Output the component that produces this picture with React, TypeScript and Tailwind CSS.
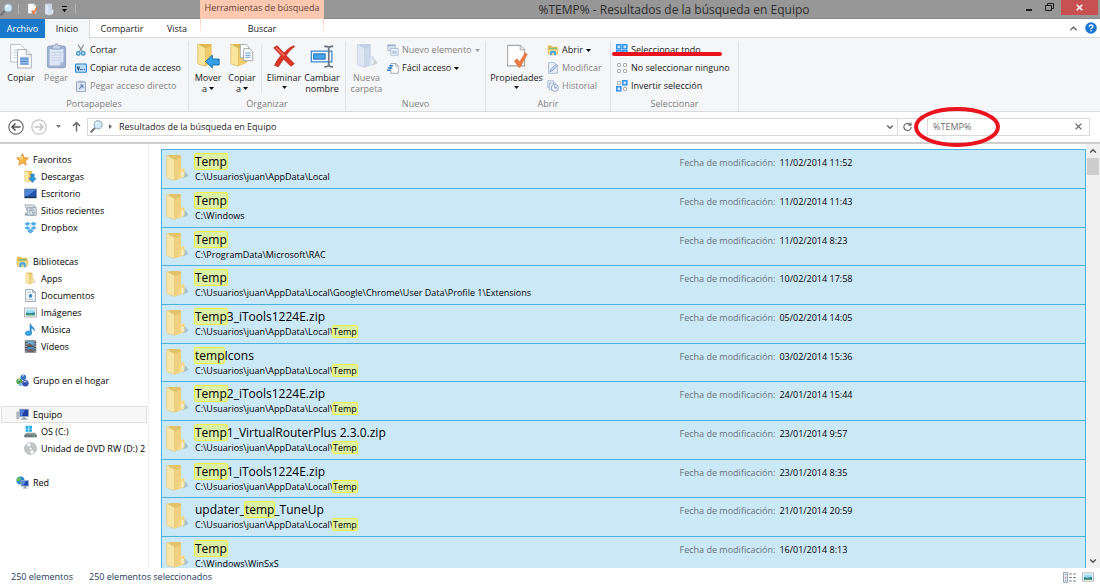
import type { ReactNode } from "react";

type IconProps = { className?: string };

/* ---------- icons ---------- */

const Svg = ({ className = "size-3", box = "0 0 16 16", children }: IconProps & { box?: string; children: ReactNode }) => (
  <svg viewBox={box} className={`shrink-0 ${className}`} fill="none" aria-hidden="true">
    {children}
  </svg>
);

const Magnifier = ({ className }: IconProps) => (
  <Svg className={className}>
    <path d="M6 10 1.500 14.500" stroke="#6d6f73" strokeWidth="2.400" strokeLinecap="round" />
    <circle cx="10" cy="6" r="5" fill="#cfe8f8" stroke="#8fa3b3" strokeWidth="1.300" />
    <path d="M7 5.500a3 3 0 0 1 3-2.500" stroke="#fff" strokeWidth="1.300" />
  </Svg>
);

const PageCheck = ({ className }: IconProps) => (
  <Svg className={className} box="0 0 24 28">
    <path d="M1.500 1.500h14l5 5v18h-19z" fill="#fff" stroke="#a6a6a6" strokeWidth="1.200" />
    <path d="M15.500 1.500v5h5" fill="#e8e8e8" stroke="#a6a6a6" />
    <path d="m9 19 3-2.500 3 3.500 6-10 2.500 1.500-8 14.500h-1.500z" fill="#ee7d45" stroke="#d4622e" strokeWidth=".6" />
  </Svg>
);

const Folder = ({ className, muted = false }: IconProps & { muted?: boolean }) => (
  <Svg className={className} box="0 0 24 28">
    <path d="M18 24.500 23.500 22q-1-3-4-5z" fill="#000" opacity=".16" />
    <path d="M3.500 1h11.500l1 1v22l-6 2z" fill={muted ? "#c3cfe4" : "#e2c36b"} />
    <path d="m1.500 1.500 7 3.500q1 .5 1 1.500v20L2.500 24q-1-.3-1-1.500z" fill={muted ? "#dfe7f4" : "#f8e6a8"} stroke={muted ? "#b7c5dd" : "#e2c578"} strokeWidth=".6" />
    <path d="M9.500 6.500 16 3.500V24l-6.500 2.500z" fill={muted ? "#cdd8ea" : "#eed080"} />
    <path d="M15 15.500q3-2 4.500-1V22q0 1-1 1.300L13 25.500z" fill={muted ? "#d5deed" : "#f3d987"} />
    <path d="M17.500 18v4.500" stroke="#fff" strokeWidth="1.400" />
  </Svg>
);

const CopyPages = ({ className }: IconProps) => (
  <Svg className={className} box="0 0 28 30">
    <path d="M2 1.500h11l5 5V22H2z" fill="#fff" stroke="#aeb4bb" />
    <path d="M5 8h9M5 11h9M5 14h9M5 17h9" stroke="#b9cde0" />
    <path d="M10 7.500h10l6 6V29H10z" fill="#fff" stroke="#9aa1a9" />
    <path d="M20 7.500v6h6" fill="#eef0f2" stroke="#9aa1a9" />
    <path d="M13 16h10v9H13z" fill="#8eb9e8" />
    <path d="M13 18.500h10M13 21.500h10M13 24.500h10" stroke="#4d86c6" />
  </Svg>
);

const Clipboard = ({ className }: IconProps) => (
  <Svg className={className} box="0 0 24 30">
    <rect x="1.500" y="3.500" width="21" height="25" rx="2" fill="#9db0d0" stroke="#8c9fc2" />
    <path d="M4 7h16v15l-4 4H4z" fill="#dde6f5" />
    <path d="M6 11h12M6 14h12M6 17h12M6 20h12" stroke="#c3d0e6" />
    <path d="M20 22h-4v4z" fill="#b3c3de" />
    <path d="M7 3h3l1-2h2l1 2h3v4H7z" fill="#c8d3e6" stroke="#8c9fc2" />
  </Svg>
);

const Scissors = ({ className }: IconProps) => (
  <Svg className={className}>
    <path d="M4 1 10 10M11.500 1 6 10" stroke="#8d969f" strokeWidth="1.800" />
    <circle cx="4.500" cy="12.500" r="2.300" stroke="#2f8fd0" strokeWidth="1.800" />
    <circle cx="11" cy="12.500" r="2.300" stroke="#2f8fd0" strokeWidth="1.800" />
  </Svg>
);

const PathBox = ({ className }: IconProps) => (
  <Svg className={className}>
    <rect x=".7" y="2.700" width="14.600" height="11" rx="1" fill="#b9dcf7" stroke="#2e86d2" strokeWidth="1.400" />
    <path d="m3 6 1.500 4.500L6 6M7 10h2M10 10h1M12 10h1" stroke="#16436f" strokeWidth="1.400" />
  </Svg>
);

const ShortcutPaste = ({ className }: IconProps) => (
  <Svg className={className}>
    <path d="M2 2.500h12v13H2z" fill="#dfe7f3" stroke="#93a5c6" strokeWidth="1.300" />
    <path d="M5 1h6v3H5z" fill="#a7b6d1" />
    <path d="m5.500 12 4.500-5M6.500 6.700H10.500V11" stroke="#7188b3" strokeWidth="1.500" />
  </Svg>
);

const FolderMove = ({ className }: IconProps) => (
  <Svg className={className} box="0 0 28 30">
    <path d="M4 1h14v22l-7 4z" fill="#dfb94f" />
    <path d="m2 1 8 4q1 .5 1 1.500V27l-8-2.500q-1-.3-1-1.500z" fill="#fae59c" stroke="#d9b555" strokeWidth=".8" />
    <path d="M11 6.500 18 3v21l-7 3z" fill="#efcd6c" />
    <path d="M11 21.500 19 14v4.500h8v7h-8V29z" fill="#34a0e8" stroke="#14659f" />
  </Svg>
);

const FolderCopy = ({ className }: IconProps) => (
  <Svg className={className} box="0 0 28 30">
    <path d="M3 1h14v22l-7 4z" fill="#dfb94f" />
    <path d="m1 1 8 4q1 .5 1 1.500V27l-8-2.500q-1-.3-1-1.500z" fill="#fae59c" stroke="#d9b555" strokeWidth=".8" />
    <path d="M10 6.500 20 3v20l-10 4z" fill="#efcd6c" />
    <path d="M12 1.500h7l3 3V17H12z" fill="#fff" stroke="#9aa1a9" />
    <path d="M16 6.500h7l3.500 3.500v10.500H16z" fill="#fff" stroke="#8f969e" />
    <path d="M18 11.500h6M18 14h6M18 16.500h6" stroke="#5d93ce" strokeWidth="1.200" />
  </Svg>
);

const DeleteCross = ({ className }: IconProps) => (
  <Svg className={className} box="0 0 28 28">
    <path d="M2 4.500 6 2l8 8.500C18 6 21 3.500 25.500 2l1 1C22 6 19 9.500 16.500 13.500L26 23l-4 3-8.500-8.500C11 21 9 24 7.500 26.500L3 25c2-4.500 4.500-8 7.500-11.500z" fill="#dd3427" stroke="#ac1d14" strokeWidth=".8" />
    <path d="m5 4.500 9 9" stroke="#f58378" strokeWidth="1.400" />
  </Svg>
);

const Rename = ({ className }: IconProps) => (
  <Svg className={className} box="0 0 28 28">
    <rect x="1.500" y="8" width="23" height="12" fill="#fff" stroke="#438fcf" strokeWidth="1.500" />
    <rect x="4" y="11" width="13" height="6" fill="#47a2ea" stroke="#1c6bb0" />
    <path d="M16 2.500q4 0 5 1.500 1-1.500 5-1.500M16 25.500q4 0 5-1.500 1 1.500 5 1.500M21 4v20" stroke="#6f7880" strokeWidth="2" />
  </Svg>
);

const NewItem = ({ className }: IconProps) => (
  <Svg className={className}>
    <path d="M1 1h10v8H1z" fill="#dbe4f1" stroke="#a3b3cf" />
    <path d="M1 1h10v2H1z" fill="#a3b3cf" />
    <path d="M5 6h10v9H5z" fill="#edf2f9" stroke="#a3b3cf" />
    <path d="M7 9h6v4H7z" fill="#b9c9e1" />
  </Svg>
);

const EasyAccess = ({ className }: IconProps) => (
  <Svg className={className}>
    <path d="M5 2h7l3 3v10H5z" fill="#fff" stroke="#8f969e" />
    <path d="M11.500 2v3.500H15" stroke="#8f969e" />
    <path d="M3 5h5M1 8h6M0 11h5" stroke="#2380cf" strokeWidth="1.700" />
  </Svg>
);

const OpenFolder = ({ className }: IconProps) => (
  <Svg className={className}>
    <path d="M1 2h5l1 1.500h7V13H1z" fill="#e6bf55" />
    <path d="M3 5h10v5H3z" fill="#78c486" />
    <path d="M1 7h14l-1.500 7h-11z" fill="#f9df8b" stroke="#d2aa44" strokeWidth=".6" />
    <path d="M4 15v-4q0-2 2-2h4q2 0 2 2v4h-2.500v-3h-3v3z" fill="#49a6e3" />
  </Svg>
);

const EditPage = ({ className }: IconProps) => (
  <Svg className={className}>
    <path d="M2 1h8l4 4v10H2z" fill="#e8eef7" stroke="#9eafcc" />
    <path d="m4 13 1-3 7-7 2 2-7 7z" fill="#c4d1e6" stroke="#8298c0" />
  </Svg>
);

const History = ({ className }: IconProps) => (
  <Svg className={className}>
    <path d="M1 1h8v9H1z" fill="#dfe7f3" stroke="#a5b5d0" />
    <path d="M3 4h8v9H3z" fill="#dfe7f3" stroke="#a5b5d0" />
    <circle cx="10.500" cy="10.500" r="4.700" fill="#edf2f9" stroke="#8fa3c6" strokeWidth="1.200" />
    <path d="M10.500 7.500v3h3" stroke="#7288b2" strokeWidth="1.200" />
  </Svg>
);

const cells = [
  [1, 1],
  [9, 1],
  [1, 9],
  [9, 9],
];

const SelectGrid = ({ className, active }: IconProps & { active: number[] }) => (
  <Svg className={className}>
    {cells.map(([x, y], i) =>
      active.includes(i) ? (
        <rect key={i} x={x} y={y} width="5.500" height="5.500" fill="#cbe6fc" stroke="#2b8ff0" strokeWidth="1.900" />
      ) : (
        <rect key={i} x={x + 1} y={y + 1} width="4" height="4" rx=".5" fill="#fff" stroke="#a5a5a5" strokeWidth="1.200" />
      ),
    )}
  </Svg>
);

const Star = ({ className }: IconProps) => (
  <Svg className={className}>
    <path d="m8 .8 2.100 4.900 5.200.5-3.900 3.500 1.200 5.200L8 12.200l-4.600 2.700 1.200-5.200L.7 6.200l5.200-.5z" fill="#fbb540" stroke="#dd7f23" strokeWidth=".9" />
    <path d="M8 3v5L4 7z" fill="#fde09a" />
  </Svg>
);

const Downloads = ({ className }: IconProps) => (
  <Svg className={className}>
    <path d="M1 1h9v13H1z" fill="#e6c35d" />
    <path d="m1 1 5 2v12l-5-1z" fill="#fdeba9" stroke="#d9b659" strokeWidth=".5" />
    <path d="M8.500 5h4v5H15l-4.500 5.500L6 10h2.500z" fill="#2f96e0" stroke="#1869a8" strokeWidth=".6" />
  </Svg>
);

const Desktop = ({ className }: IconProps) => (
  <Svg className={className}>
    <path d="M.5 2.500h15v11H.5z" fill="#2454ad" stroke="#8894a8" />
    <path d="M1 3h14L4 11H1z" fill="#4f86d8" />
    <path d="M1 12h14v1.500H1z" fill="#222f4d" />
  </Svg>
);

const Recent = ({ className }: IconProps) => (
  <Svg className={className}>
    <path d="M1 1h9l3 1v6H4z" fill="#e7ecef" stroke="#959fa7" />
    <path d="M4 4h11v10H4z" fill="#dce5eb" stroke="#8e99a3" />
    <path d="M6 6h6M6 8h3" stroke="#879cae" />
    <circle cx="10" cy="10.500" r="3" fill="#fff" stroke="#7b91a5" />
    <path d="M10 9v2h2" stroke="#4f6e87" />
    <path d="m2 10 3 4H1z" fill="#819bb0" />
  </Svg>
);

const Dropbox = ({ className }: IconProps) => (
  <Svg className={className}>
    <path d="M4.500 1 8 3.500 4 6 .5 3.500zM11.500 1l4 2.500L12 6 8 3.500zM4 6l4 2.500L4.500 11 .5 8.500zM12 6l3.500 2.500-4 2.500L8 8.500zM8 9.500l3.500 2.300V13L8 15.300 4.500 13v-1.200z" fill="#55aee9" />
    <path d="m8 3.500 4 2.500-4 2.500L4 6z" fill="#d8effc" />
  </Svg>
);

const Documents = ({ className }: IconProps) => (
  <Svg className={className}>
    <path d="M2 .7h8.500L14 4v11.300H2z" fill="#f4f8fb" stroke="#8a98a6" />
    <path d="M10.500.7V4H14" stroke="#8a98a6" />
    <path d="M4.500 4h4M4.500 12.500h7" stroke="#8fb4d5" />
    <circle cx="8" cy="8.500" r="2.200" fill="#3d86c2" />
  </Svg>
);

const Picture = ({ className }: IconProps) => (
  <Svg className={className}>
    <path d="M.6 2.500h14.800v11H.6z" fill="#fff" stroke="#919ba5" />
    <path d="M2.500 4.500h11v7h-11z" fill="#9fdaf4" />
    <path d="m2.500 8 4 1 7-1v3.500h-11z" fill="#1f7c99" />
    <path d="M2.500 10.500 8 9.500l5.500 1v1h-11z" fill="#54a45d" />
  </Svg>
);

const Music = ({ className }: IconProps) => (
  <Svg className={className}>
    <path d="M8 1c0 3 5.500 4 5 9-.6-2-2-3.500-4-4v6.500H7.300V1z" fill="#2c93dc" stroke="#1a74b8" strokeWidth=".5" />
    <ellipse cx="5.500" cy="12.500" rx="4" ry="2.800" fill="#3ca5e8" stroke="#1a74b8" strokeWidth=".6" />
  </Svg>
);

const Film = ({ className }: IconProps) => (
  <Svg className={className}>
    <path d="M1 .5h14v15H1z" fill="#4a4f56" />
    <path d="M4 1.500h8v6H4z" fill="#66b3df" />
    <path d="M4 8.500h8v6H4z" fill="#4b8cba" />
    <path d="m4 6 3-2 5 3v.5H4zM4 13l4-2 4 2v1.500H4z" fill="#7d5a52" />
    <path d="M2.500 1v14M13.500 1v14" stroke="#e8e8e8" strokeWidth="1.400" strokeDasharray="1.500 1.500" />
  </Svg>
);

const HomeGroup = ({ className }: IconProps) => (
  <Svg className={className}>
    <circle cx="9" cy="4" r="3.500" fill="#3570c2" />
    <circle cx="4" cy="9" r="3.500" fill="#4da043" />
    <circle cx="11.500" cy="11.500" r="4" fill="#3b52b4" />
    <circle cx="5.500" cy="13" r="2" fill="#6fbfe8" />
    <path d="M7.500 2.500q1.500-1 2.500 0M2.500 8q1.200-1.500 2.500-.5M9.500 10q1.500-1.500 3.500-.3" stroke="#e4f2fb" strokeWidth="1.200" />
  </Svg>
);

const Computer = ({ className }: IconProps) => (
  <Svg className={className}>
    <path d="M1 5h2.500v8H1z" fill="#b7bfc6" stroke="#828b94" strokeWidth=".6" />
    <path d="M4.500 1.500h11v9h-11z" fill="#1d3fa8" stroke="#a4adb8" />
    <path d="M5 2h6L7 10H5z" fill="#4f7fdc" />
    <path d="M8.500 11h3v2h2.500v1.500H6V13h2.500z" fill="#9aa4ae" />
  </Svg>
);

const Drive = ({ className }: IconProps) => (
  <Svg className={className}>
    <path d="M2 1h3.500v3.500H2zM6.300 1h3.500v3.500H6.300zM2 5.300h3.500v3H2zM6.300 5.300h3.500v3H6.300z" fill="#19aee5" />
    <path d="m3 9.500 10.500 0L15.500 12v3H.5v-3z" fill="#8d989f" />
    <path d="M.5 12h15v3H.5z" fill="#6c777e" />
    <path d="M11.500 13.500h2" stroke="#77ef73" strokeWidth="1.400" />
  </Svg>
);

const Disc = ({ className }: IconProps) => (
  <Svg className={className}>
    <circle cx="8" cy="8" r="7.200" fill="#c5c8ca" stroke="#97999b" strokeWidth=".8" />
    <path d="M8 8 3 3a7 7 0 0 1 5-2zM8 8l5 5a7 7 0 0 1-5 2z" fill="#f2f3f4" />
    <circle cx="8" cy="8" r="2" fill="#fff" stroke="#97999b" strokeWidth=".8" />
  </Svg>
);

const Network = ({ className }: IconProps) => (
  <Svg className={className}>
    <circle cx="5.500" cy="5.500" r="5" fill="#2c86cf" />
    <path d="M2 2.500q3-2 4 .5T3 6 .8 5zM5 7l3 .5L6 10.300z" fill="#6bc653" />
    <path d="M6.500 5.500h9v7h-9z" fill="#1f45b2" stroke="#a9b7ca" />
    <path d="M7 6h5l-3 6H7z" fill="#5c8be2" />
    <path d="M10 13h2.500v1.500h1.500v1H8.500v-1H10z" fill="#8794a3" />
  </Svg>
);

const Caret = ({ className = "text-black" }: IconProps) => (
  <svg viewBox="0 0 5 3" className={`h-[3px] w-[5px] shrink-0 ${className}`} aria-hidden="true">
    <path d="M0 0h5L2.500 3z" fill="currentColor" />
  </svg>
);

const Chevron = ({ className, up = false }: IconProps & { up?: boolean }) => (
  <Svg className={className} box="0 0 10 10">
    <path d={up ? "M1.500 7 5 3.500 8.500 7" : "M1.500 3 5 6.500 8.500 3"} stroke="currentColor" strokeWidth="1.800" />
  </Svg>
);

/* ---------- ribbon ---------- */

type BigButtonProps = { icon: ReactNode; lines: string[]; caret?: boolean; disabled?: boolean; className?: string };

function BigButton({ icon, lines, caret, disabled, className = "" }: BigButtonProps) {
  const oneLine = lines.length === 1;
  return (
    <button
      type="button"
      disabled={disabled}
      className={`flex flex-col items-center pt-px leading-[11px] ${disabled ? "text-[#858585]" : ""} ${className}`}>
      <span className="mb-[2px] flex h-7 items-center">{icon}</span>
      {lines.map((line, i) => (
        <span key={line} className="flex items-center gap-[2px] whitespace-nowrap">
          {line}
          {caret && !oneLine && i === lines.length - 1 && <Caret />}
        </span>
      ))}
      {caret && oneLine && <Caret className="mt-[3px]" />}
    </button>
  );
}

type SmallButtonProps = { icon: ReactNode; label: string; caret?: boolean; disabled?: boolean; children?: ReactNode };

function SmallButton({ icon, label, caret, disabled, children }: SmallButtonProps) {
  return (
    <button
      type="button"
      disabled={disabled}
      className={`relative flex h-[18px] items-center gap-[3px] whitespace-nowrap ${disabled ? "text-[#858585]" : ""}`}>
      {icon}
      {label}
      {caret && <Caret className={disabled ? "text-[#a0a0a0]" : "text-black"} />}
      {children}
    </button>
  );
}

function Group({ title, className, children }: { title: string; className: string; children: ReactNode }) {
  return (
    <section aria-label={title} className={`flex shrink-0 flex-col border-r border-[#e2e3e4] ${className}`}>
      <div className="flex h-14">{children}</div>
      <div className="text-center leading-[14px] text-[#808080]">{title}</div>
    </section>
  );
}

function Ribbon() {
  return (
    <div className="flex h-[74px] shrink-0 overflow-hidden border-b border-[#dadbdc] bg-[#f5f6f7] pt-[3px]">
      <Group title="Portapapeles" className="w-[189px]">
        <BigButton className="w-[42px]" icon={<CopyPages className="h-[26px] w-6" />} lines={["Copiar"]} />
        <BigButton className="w-7" icon={<Clipboard className="h-[26px] w-[21px]" />} lines={["Pegar"]} disabled />
        <div className="ml-[5px] flex flex-col">
          <SmallButton icon={<Scissors />} label="Cortar" />
          <SmallButton icon={<PathBox />} label="Copiar ruta de acceso" />
          <SmallButton icon={<ShortcutPaste />} label="Pegar acceso directo" disabled />
        </div>
      </Group>
      <Group title="Organizar" className="w-[157px]">
        <BigButton className="w-[38px]" icon={<FolderMove className="h-[26px] w-6" />} lines={["Mover", "a"]} caret />
        <BigButton className="w-[30px]" icon={<FolderCopy className="h-[26px] w-6" />} lines={["Copiar", "a"]} caret />
        <div className="mx-[4px] my-1 w-px bg-[#e2e3e4]" />
        <BigButton className="w-9" icon={<DeleteCross className="size-6" />} lines={["Eliminar"]} caret />
        <BigButton className="w-10" icon={<Rename className="size-[25px]" />} lines={["Cambiar", "nombre"]} />
      </Group>
      <Group title="Nuevo" className="w-[140px]">
        <BigButton className="w-[41px]" icon={<Folder muted className="h-[26px] w-[22px]" />} lines={["Nueva", "carpeta"]} disabled />
        <div className="flex flex-col">
          <SmallButton icon={<NewItem />} label="Nuevo elemento" caret disabled />
          <SmallButton icon={<EasyAccess />} label="Fácil acceso" caret />
        </div>
      </Group>
      <Group title="Abrir" className="w-[125px]">
        <BigButton className="w-[61px]" icon={<PageCheck className="h-[25px] w-[22px]" />} lines={["Propiedades"]} caret />
        <div className="flex flex-col">
          <SmallButton icon={<OpenFolder />} label="Abrir" caret />
          <SmallButton icon={<EditPage />} label="Modificar" disabled />
          <SmallButton icon={<History />} label="Historial" disabled />
        </div>
      </Group>
      <Group title="Seleccionar" className="w-[128px]">
        <div className="ml-[5px] flex flex-col items-start">
          <SmallButton icon={<SelectGrid active={[0, 1, 2, 3]} />} label="Seleccionar todo">
            <span className="absolute top-[11px] -left-1 h-1 w-[110px] rounded-full bg-[#e8111c]" />
          </SmallButton>
          <SmallButton icon={<SelectGrid active={[]} />} label="No seleccionar ninguno" />
          <SmallButton icon={<SelectGrid active={[1, 2]} />} label="Invertir selección" />
        </div>
      </Group>
    </div>
  );
}

/* ---------- title bar and tabs ---------- */

function TitleBar() {
  return (
    <header className="flex h-[19px] shrink-0 border-b border-[#8a8a8a] bg-[#979797]">
      <div className="flex w-[200px] shrink-0 items-center">
        <Magnifier className="size-[13px]" />
        <span className="ml-[5px] h-[10px] w-px bg-[#b4b4b4]" />
        <PageCheck className="ml-2 h-3 w-[11px]" />
        <Folder muted className="ml-[6px] h-[13px] w-3" />
        <span className="ml-[6px] flex flex-col items-center gap-[2px]">
          <span className="h-px w-[5px] bg-black" />
          <Caret />
        </span>
        <span className="ml-2 h-[10px] w-px bg-[#b4b4b4]" />
      </div>
      <div className="-mb-px w-[124px] shrink-0 bg-[#fcc9b0] text-center leading-4 text-[#5c4338]">Herramientas de búsqueda</div>
      <h1 className="min-w-0 flex-1 truncate pl-1 text-center text-xs leading-5 text-[#2e2e2e]">
        %TEMP% - Resultados de la búsqueda en Equipo
      </h1>
      <div className="flex w-20 shrink-0 items-start">
        <button type="button" aria-label="Minimizar" className="flex h-[15px] w-[17px] items-center justify-center pt-1">
          <span className="h-[2px] w-[6px] bg-[#1c1c1c]" />
        </button>
        <button type="button" aria-label="Restaurar" className="flex h-[15px] w-6 items-center justify-center">
          <Svg className="size-[9px]" box="0 0 9 9">
            <path d="M.5 2.500h6v5h-6zM2.500 2V.5h6v5H7" stroke="#1c1c1c" />
          </Svg>
        </button>
        <button type="button" aria-label="Cerrar" className="flex h-[15px] w-[37px] items-center justify-center bg-[#c75050]">
          <Svg className="size-[7px]" box="0 0 7 7">
            <path d="m.7.7 5.600 5.600M6.300.7.7 6.300" stroke="#fff" strokeWidth="1.500" />
          </Svg>
        </button>
      </div>
    </header>
  );
}

function Tabs() {
  return (
    <nav className="flex h-[19px] shrink-0 items-stretch bg-white leading-5">
      <button type="button" className="w-[45px] bg-[#1979ca] text-white">Archivo</button>
      <button type="button" className="z-10 -mb-px w-[45px] border-r border-[#dadbdc] bg-[#f5f6f7]">Inicio</button>
      <button type="button" className="w-16 border-b border-[#dadbdc]">Compartir</button>
      <button type="button" className="w-[46px] border-b border-[#dadbdc]">Vista</button>
      <div className="w-[124px] border-b border-[#dadbdc] bg-linear-to-b from-[#fcc9b0] to-white px-px">
        <button type="button" className="h-full w-full bg-white">Buscar</button>
      </div>
      <div className="flex flex-1 items-center justify-end gap-[7px] border-b border-[#dadbdc] pr-[3px] text-[#777]">
        <button type="button" aria-label="Minimizar la cinta">
          <Chevron up className="size-[9px]" />
        </button>
        <button type="button" aria-label="Ayuda">
          <Svg className="size-3" box="0 0 12 12">
            <circle cx="6" cy="6" r="5.800" fill="#1777d2" />
            <path d="M4.200 4.700q.1-1.700 1.900-1.700t1.800 1.500Q7.900 5.500 6.800 6T6.100 7.300M6.100 8.300v1.300" stroke="#fff" strokeWidth="1.300" />
          </Svg>
        </button>
      </div>
    </nav>
  );
}

/* ---------- address bar ---------- */

function AddressBar() {
  return (
    <div className="flex h-8 shrink-0 items-center border-b-2 border-[#cfcfcf] bg-white pr-[10px] pb-px pl-2">
      <button type="button" aria-label="Atrás">
        <Svg className="size-4">
          <circle cx="8" cy="8" r="7.200" stroke="#6b6b6b" strokeWidth="1.200" />
          <path d="M12.500 8H4M7.500 4.500 4 8l3.500 3.500" stroke="#555" strokeWidth="1.600" />
        </Svg>
      </button>
      <button type="button" aria-label="Adelante" className="ml-[7px]">
        <Svg className="size-4">
          <circle cx="8" cy="8" r="7.200" stroke="#c4c4c4" strokeWidth="1.200" />
          <path d="M3.500 8H12M8.500 4.500 12 8l-3.500 3.500" stroke="#c4c4c4" strokeWidth="1.600" />
        </Svg>
      </button>
      <button type="button" aria-label="Ubicaciones recientes" className="ml-[9px]">
        <Caret className="text-[#777]" />
      </button>
      <button type="button" aria-label="Subir" className="ml-[10px]">
        <Svg className="size-[11px]" box="0 0 11 11">
          <path d="M5.500 10.500V1.500M2 5l3.500-3.500L9 5" stroke="#6b6b6b" strokeWidth="1.500" />
        </Svg>
      </button>
      <div className="ml-[5px] flex h-[18px] flex-1 items-center border border-[#d9d9d9] pl-[2px]">
        <Magnifier className="size-[13px]" />
        <svg viewBox="0 0 3 5" className="ml-[6px] h-[5px] w-[3px]" aria-hidden="true">
          <path d="M0 0v5l3-2.500z" fill="#666" />
        </svg>
        <span className="ml-[7px] flex-1 whitespace-nowrap">Resultados de la búsqueda en Equipo</span>
        <button type="button" aria-label="Ubicaciones anteriores" className="px-[3px] text-[#666]">
          <Chevron className="size-2" />
        </button>
        <button type="button" aria-label="Actualizar" className="flex h-full items-center border-l border-[#d9d9d9] px-[5px]">
          <Svg className="size-[9px]" box="0 0 10 10">
            <path d="M8.300 3.200A4 4 0 1 0 9 5.500M8.800.5v3H5.800" stroke="#666" strokeWidth="1.300" />
          </Svg>
        </button>
      </div>
      <div className="relative ml-[9px] flex h-[18px] w-[163px] shrink-0 items-center border border-[#d9d9d9]">
        <input
          type="text"
          aria-label="Buscar en Equipo"
          defaultValue="%TEMP%"
          className="h-full min-w-0 flex-1 bg-transparent pl-[5px] text-[#6d6d6d] outline-none"
        />
        <button type="button" aria-label="Borrar búsqueda" className="px-[7px]">
          <Svg className="size-[7px]" box="0 0 7 7">
            <path d="m.6.6 5.800 5.800M6.400.6.600 6.400" stroke="#666" strokeWidth="1.300" />
          </Svg>
        </button>
        <svg viewBox="0 0 86 40" className="pointer-events-none absolute -top-[12px] -left-[14px] h-10 w-[86px]" aria-hidden="true">
          <ellipse cx="43" cy="20" rx="41" ry="18" fill="none" stroke="#ea121c" strokeWidth="4" />
        </svg>
      </div>
    </div>
  );
}

/* ---------- navigation pane ---------- */

type NavEntry = { label: string; icon: ReactNode; selected?: boolean; items?: { label: string; icon: ReactNode }[] };

const nav: NavEntry[] = [
  {
    label: "Favoritos",
    icon: <Star className="size-[13px]" />,
    items: [
      { label: "Descargas", icon: <Downloads className="size-[13px]" /> },
      { label: "Escritorio", icon: <Desktop className="size-[13px]" /> },
      { label: "Sitios recientes", icon: <Recent className="size-[13px]" /> },
      { label: "Dropbox", icon: <Dropbox className="size-[13px]" /> },
    ],
  },
  {
    label: "Bibliotecas",
    icon: <OpenFolder className="size-[13px]" />,
    items: [
      { label: "Apps", icon: <Folder className="size-[13px]" /> },
      { label: "Documentos", icon: <Documents className="size-[13px]" /> },
      { label: "Imágenes", icon: <Picture className="size-[13px]" /> },
      { label: "Música", icon: <Music className="size-[13px]" /> },
      { label: "Vídeos", icon: <Film className="size-[13px]" /> },
    ],
  },
  { label: "Grupo en el hogar", icon: <HomeGroup className="size-[13px]" /> },
  {
    label: "Equipo",
    icon: <Computer className="size-[13px]" />,
    selected: true,
    items: [
      { label: "OS (C:)", icon: <Drive className="size-[13px]" /> },
      { label: "Unidad de DVD RW (D:) 2", icon: <Disc className="size-[13px]" /> },
    ],
  },
  { label: "Red", icon: <Network className="size-[13px]" /> },
];

function Sidebar() {
  return (
    <nav className="flex w-[149px] shrink-0 flex-col gap-[17px] overflow-hidden border-r border-[#f0f0f0] pt-[7px] text-black">
      {nav.map((entry) => (
        <div key={entry.label}>
          <a
            href="#"
            className={`mr-px ml-px flex h-[17px] items-center gap-1 border pl-[14px] ${entry.selected ? "border-[#dedede] bg-[#f7f7f7]" : "border-transparent"}`}>
            {entry.icon}
            {entry.label}
          </a>
          {entry.items?.map((item) => (
            <a key={item.label} href="#" className="flex h-[17px] items-center gap-1 pl-6 whitespace-nowrap">
              {item.icon}
              {item.label}
            </a>
          ))}
        </div>
      ))}
    </nav>
  );
}

/* ---------- results ---------- */

const results = [
  { name: "Temp", path: "C:\\Usuarios\\juan\\AppData\\Local", date: "11/02/2014 11:52" },
  { name: "Temp", path: "C:\\Windows", date: "11/02/2014 11:43" },
  { name: "Temp", path: "C:\\ProgramData\\Microsoft\\RAC", date: "11/02/2014 8:23" },
  { name: "Temp", path: "C:\\Usuarios\\juan\\AppData\\Local\\Google\\Chrome\\User Data\\Profile 1\\Extensions", date: "10/02/2014 17:58" },
  { name: "Temp3_iTools1224E.zip", path: "C:\\Usuarios\\juan\\AppData\\Local\\Temp", date: "05/02/2014 14:05" },
  { name: "tempIcons", path: "C:\\Usuarios\\juan\\AppData\\Local\\Temp", date: "03/02/2014 15:36" },
  { name: "Temp2_iTools1224E.zip", path: "C:\\Usuarios\\juan\\AppData\\Local\\Temp", date: "24/01/2014 15:44" },
  { name: "Temp1_VirtualRouterPlus 2.3.0.zip", path: "C:\\Usuarios\\juan\\AppData\\Local\\Temp", date: "23/01/2014 9:57" },
  { name: "Temp1_iTools1224E.zip", path: "C:\\Usuarios\\juan\\AppData\\Local\\Temp", date: "23/01/2014 8:35" },
  { name: "updater_temp_TuneUp", path: "C:\\Usuarios\\juan\\AppData\\Local\\Temp", date: "21/01/2014 20:59" },
  { name: "Temp", path: "C:\\Windows\\WinSxS", date: "16/01/2014 8:13" },
];

// Wraps every case-insensitive "temp" in a highlight box
function Highlight({ text }: { text: string }) {
  return text.split(/(temp)/i).map((part, i) =>
    i % 2 === 1 ? (
      <mark key={i} className="-mx-px rounded-[3px] bg-[#dcefa6] px-px text-inherit ring-1 ring-[#f1f03c] ring-inset">
        {part}
      </mark>
    ) : (
      part
    ),
  );
}

function Results() {
  return (
    <main className="ml-3 flex min-w-0 flex-1 overflow-hidden text-black">
      <ul className="mt-[5px] min-w-0 flex-1 self-start border-x border-t border-[#4cb1dd]">
        {results.map((r, i) => (
          <li
            key={i}
            className="flex h-[39px] border-b border-[#4cb1dd] bg-[#cbe8f6] nth-[3n]:h-[38px]">
            <Folder className="mt-1 ml-[3px] h-7 w-6" />
            <div className="mt-1 ml-[6px] grid min-w-0 flex-1 grid-cols-[54%_1fr] whitespace-nowrap">
              <div>
                <div className="text-xs leading-4">
                  <Highlight text={r.name} />
                </div>
                <div className="leading-[14px]">
                  <Highlight text={r.path} />
                </div>
              </div>
              <div className="flex gap-1 pl-1 leading-[18px]">
                <span className="text-[#66737a]">Fecha de modificación:</span>
                <span>{r.date}</span>
              </div>
            </div>
          </li>
        ))}
      </ul>
      <div className="flex w-[14px] shrink-0 flex-col items-center bg-[#f0f0f0] text-[#505050]">
        <button type="button" aria-label="Desplazar arriba" className="flex h-[14px] items-center">
          <Chevron up className="size-2" />
        </button>
        <div className="h-[17px] w-3 bg-[#cdcdcd]" />
        <button type="button" aria-label="Desplazar abajo" className="mt-auto flex h-[14px] items-center">
          <Chevron className="size-2" />
        </button>
      </div>
    </main>
  );
}

function StatusBar() {
  return (
    <footer className="flex h-[17px] shrink-0 items-center bg-white pt-px pr-[6px] pl-[11px] text-[#1e395b]">
      <span>250 elementos</span>
      <span className="ml-4">250 elementos seleccionados</span>
      <button type="button" aria-label="Detalles" className="ml-auto">
        <Svg className="h-[11px] w-[13px]" box="0 0 13 11">
          <path d="M.5.5h4v10h-4z" fill="#e3ebf2" stroke="#9aa7b5" />
          <path d="M2.500 2v1M2.500 8v1" stroke="#6c8db0" />
          <path d="M2.500 5v1.500" stroke="#d6695c" />
          <path d="M6 2h3M10 2h3M6 5.500h3M10 5.500h3M6 9h3M10 9h3" stroke="#7e8894" />
        </Svg>
      </button>
      <button type="button" aria-label="Iconos grandes" className="ml-[6px]">
        <Picture className="size-3" />
      </button>
    </footer>
  );
}

export default function App() {
  return (
    <div className="flex h-screen flex-col overflow-hidden bg-white font-['Open_Sans',sans-serif] text-[9px] text-[#1b1b1b]">
      <TitleBar />
      <Tabs />
      <Ribbon />
      <AddressBar />
      <div className="flex min-h-0 flex-1">
        <Sidebar />
        <Results />
      </div>
      <StatusBar />
    </div>
  );
}
